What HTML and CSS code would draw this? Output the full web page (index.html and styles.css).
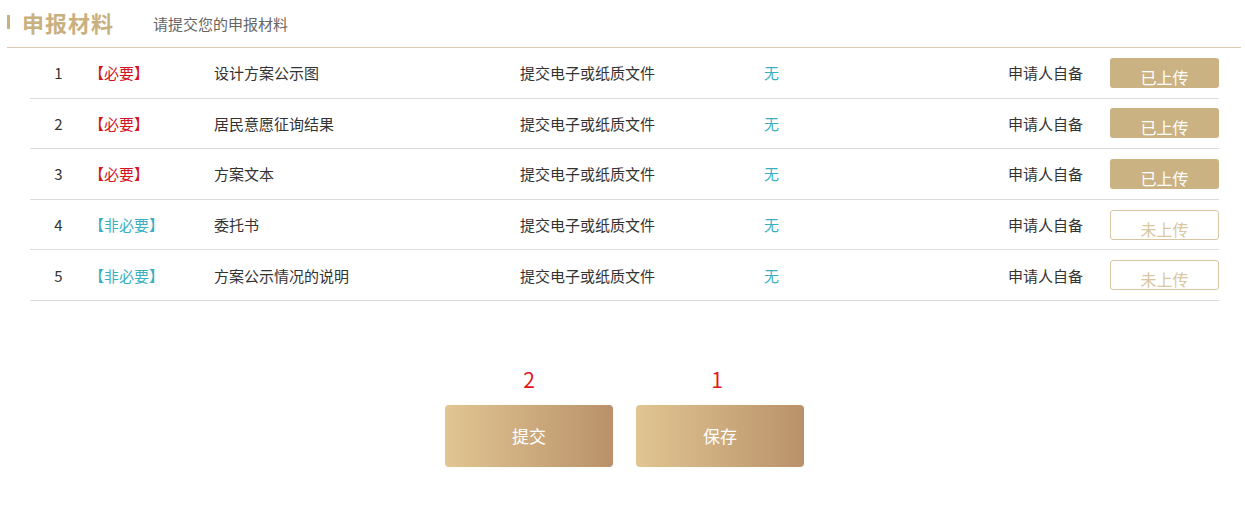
FILE: index.html
```html
<!DOCTYPE html>
<html lang="zh-CN">
<head>
<meta charset="utf-8">
<title>申报材料</title>
<link rel="stylesheet" href="styles.css">
</head>
<body>
<div class="page">
  <div class="section-head">
    <span class="bar"></span>
    <h2 class="title">申报材料</h2>
    <span class="subtitle">请提交您的申报材料</span>
  </div>
  <div class="table">
    <div class="row">
      <div class="c-idx">1</div>
      <div class="c-tag req">【必要】</div>
      <div class="c-name">设计方案公示图</div>
      <div class="c-form">提交电子或纸质文件</div>
      <div class="c-none">无</div>
      <div class="c-src">申请人自备</div>
      <div class="c-btn"><span class="up done">已上传</span></div>
    </div>
    <div class="row">
      <div class="c-idx">2</div>
      <div class="c-tag req">【必要】</div>
      <div class="c-name">居民意愿征询结果</div>
      <div class="c-form">提交电子或纸质文件</div>
      <div class="c-none">无</div>
      <div class="c-src">申请人自备</div>
      <div class="c-btn"><span class="up done">已上传</span></div>
    </div>
    <div class="row">
      <div class="c-idx">3</div>
      <div class="c-tag req">【必要】</div>
      <div class="c-name">方案文本</div>
      <div class="c-form">提交电子或纸质文件</div>
      <div class="c-none">无</div>
      <div class="c-src">申请人自备</div>
      <div class="c-btn"><span class="up done">已上传</span></div>
    </div>
    <div class="row">
      <div class="c-idx">4</div>
      <div class="c-tag opt">【非必要】</div>
      <div class="c-name">委托书</div>
      <div class="c-form">提交电子或纸质文件</div>
      <div class="c-none">无</div>
      <div class="c-src">申请人自备</div>
      <div class="c-btn"><span class="up todo">未上传</span></div>
    </div>
    <div class="row">
      <div class="c-idx">5</div>
      <div class="c-tag opt">【非必要】</div>
      <div class="c-name">方案公示情况的说明</div>
      <div class="c-form">提交电子或纸质文件</div>
      <div class="c-none">无</div>
      <div class="c-src">申请人自备</div>
      <div class="c-btn"><span class="up todo">未上传</span></div>
    </div>
  </div>
  <div class="actions">
    <div class="action">
      <div class="num">2</div>
      <button class="big">提交</button>
    </div>
    <div class="action">
      <div class="num">1</div>
      <button class="big">保存</button>
    </div>
  </div>
</div>
</body>
</html>
```

FILE: styles.css
```css
html, body {
  margin: 0;
  padding: 0;
  background: #fff;
}
body {
  font-family: "Noto Sans CJK SC", "Noto Sans", sans-serif;
  font-size: 15px;
  color: #333;
}
.page {
  width: 1245px;
}
.section-head {
  display: flex;
  align-items: center;
  margin: 0 4px 0 7px;
  border-bottom: 1px solid #d9ccb1;
  box-sizing: border-box;
  height: 48px;
}
.bar {
  width: 3px;
  height: 14px;
  background: #c9b07f;
  margin-top: -3px;
}
.title {
  margin: -3px 0 0 12px;
  font-size: 22px;
  font-weight: bold;
  color: #c9b07f;
  letter-spacing: 1px;
}
.subtitle {
  margin-left: 39px;
  font-size: 15px;
  color: #666;
}
.table {
  margin: 0 26px 0 30px;
}
.row {
  display: grid;
  grid-template-columns: 56px 128px 306px 244px 244px 102px 109px;
  align-items: center;
  height: 50.6px;
  border-bottom: 1px solid #dcdcdc;
  box-sizing: border-box;
}
.c-idx {
  text-align: center;
  padding-left: 1px;
}
.c-tag {
  padding-left: 3px;
}
.req { color: #d4141e; }
.opt { color: #3aafc2; }
.c-none { color: #3aafc2; }
.c-btn {
  display: flex;
}
.up {
  display: block;
  width: 109px;
  height: 30px;
  box-sizing: border-box;
  border-radius: 3px;
  font-size: 16px;
  line-height: 38px;
  text-align: center;
  overflow: hidden;
}
.done {
  background: #cbb282;
  color: #fff;
}
.todo {
  border: 1px solid #d6c6a3;
  color: #d8c79f;
  line-height: 36px;
}
.actions {
  display: flex;
  justify-content: center;
  gap: 23px;
  margin-top: 64px;
  padding-left: 4px;
}
.action {
  display: flex;
  flex-direction: column;
  align-items: center;
}
.num {
  font-size: 21px;
  line-height: 28px;
  color: #e3141e;
  margin-bottom: 12px;
}
.action:last-child .num {
  margin-right: 6px;
}
.big {
  width: 168px;
  height: 62px;
  border: none;
  border-radius: 4px;
  background: linear-gradient(to right, #e1c592, #b9916a);
  color: #fff;
  font-family: "Noto Sans CJK SC", "Noto Sans", sans-serif;
  font-size: 17px;
  padding: 0;
}
```
